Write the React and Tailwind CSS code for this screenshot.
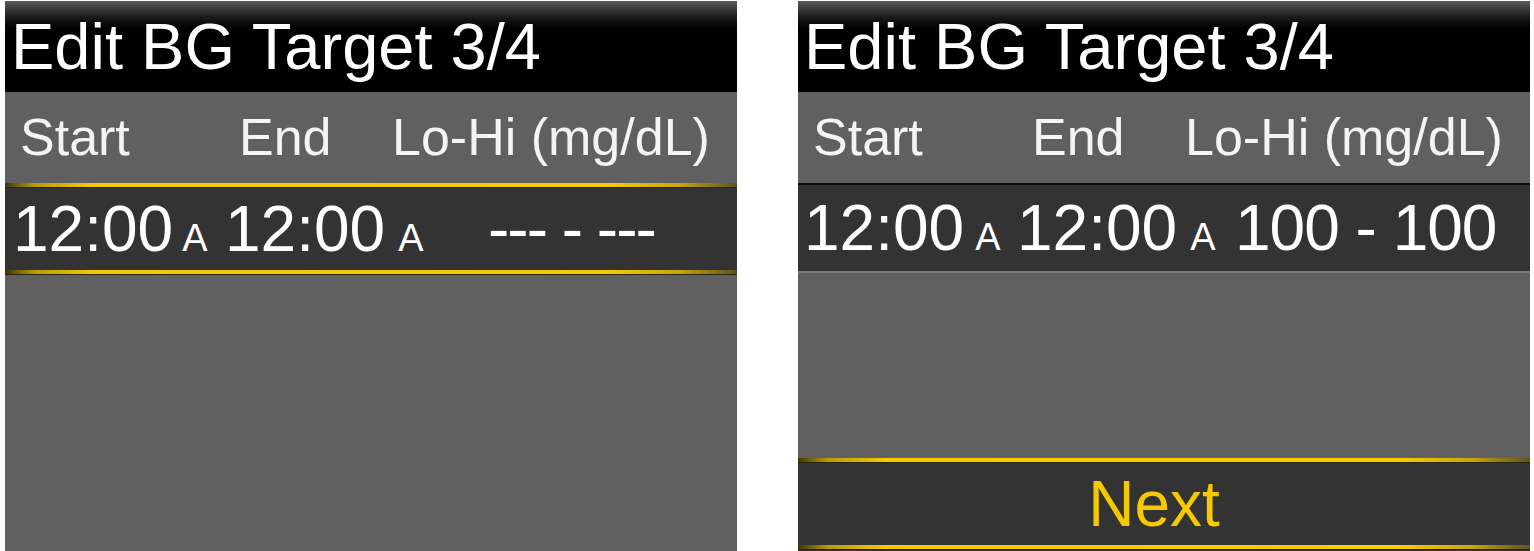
import React from "react";

const font = { fontFamily: '"Liberation Sans", Arial, sans-serif' };

function GoldLine() {
  return (
    <div className="flex flex-col">
      <div className="h-[4px] bg-[linear-gradient(to_right,#3d3606_0%,#b89a08_4%,#f4c900_12%,#f7cd00_82%,#c9a60a_92%,#5b5320_100%)]" />
      <div className="h-[1px] bg-[#2a2508]" />
    </div>
  );
}

function Title() {
  return (
    <div className="h-[91px] pl-[6px] bg-[linear-gradient(to_bottom,#5a5a5a_0%,#1a1a1a_18%,#000_30%,#000_100%)] text-white text-[65px] leading-[91px] whitespace-nowrap">
      Edit BG Target 3/4
    </div>
  );
}

function Header() {
  return (
    <div className="h-[91px] bg-[#606060] text-[#f4f4f4] text-[52px] leading-[91px] flex whitespace-nowrap">
      <span className="w-[234px] pl-[15px]">Start</span>
      <span className="w-[153px]">End</span>
      <span>Lo-Hi (mg/dL)</span>
    </div>
  );
}

function Time({ gap }) {
  return (
    <>
      <span>12:00</span>
      <span className={"text-[38px] " + gap}>A</span>
    </>
  );
}

export default function App() {
  return (
    <div className="w-[1534px] h-[551px] bg-white flex pl-[5px] gap-[61px] overflow-hidden" style={font}>
      {/* left screen */}
      <div className="w-[732px] h-[550px] mt-[1px] flex flex-col bg-[#606060]">
        <Title />
        <Header />
        <GoldLine />
        <div className="h-[82px] bg-[#333333] text-white text-[64px] leading-[82px] whitespace-nowrap">
          <span className="inline-block w-[220px] pl-[8px]">
            <Time gap="ml-[9px]" />
          </span>
          <span className="inline-block w-[263px]">
            <Time gap="ml-[13px]" />
          </span>
          <span className="inline-block tracking-[-2px]">--- - ---</span>
        </div>
        <GoldLine />
        <div className="flex-1 bg-[#606060]" />
      </div>

      {/* right screen */}
      <div className="w-[732px] h-[550px] mt-[1px] flex flex-col bg-[#606060]">
        <Title />
        <Header />
        <div className="h-[2px] bg-[#0a0a0a]" />
        <div className="h-[86px] bg-[#333333] text-white text-[64px] leading-[86px] whitespace-nowrap">
          <span className="inline-block w-[219px] pl-[6px]">
            <Time gap="ml-[11px]" />
          </span>
          <span className="inline-block w-[218px]">
            <Time gap="ml-[13px]" />
          </span>
          <span className="inline-block tracking-[-1px]">100 - 100</span>
        </div>
        <div className="h-[2px] bg-[#7a7a7a]" />
        <div className="flex-1 bg-[#606060]" />
        <GoldLine />
        <div className="h-[82px] bg-[#333333] text-[#f5c800] text-[64px] leading-[82px] text-center pr-[20px]">
          Next
        </div>
        <GoldLine />
        <div className="h-[1px] bg-[#333333]" />
      </div>
    </div>
  );
}
